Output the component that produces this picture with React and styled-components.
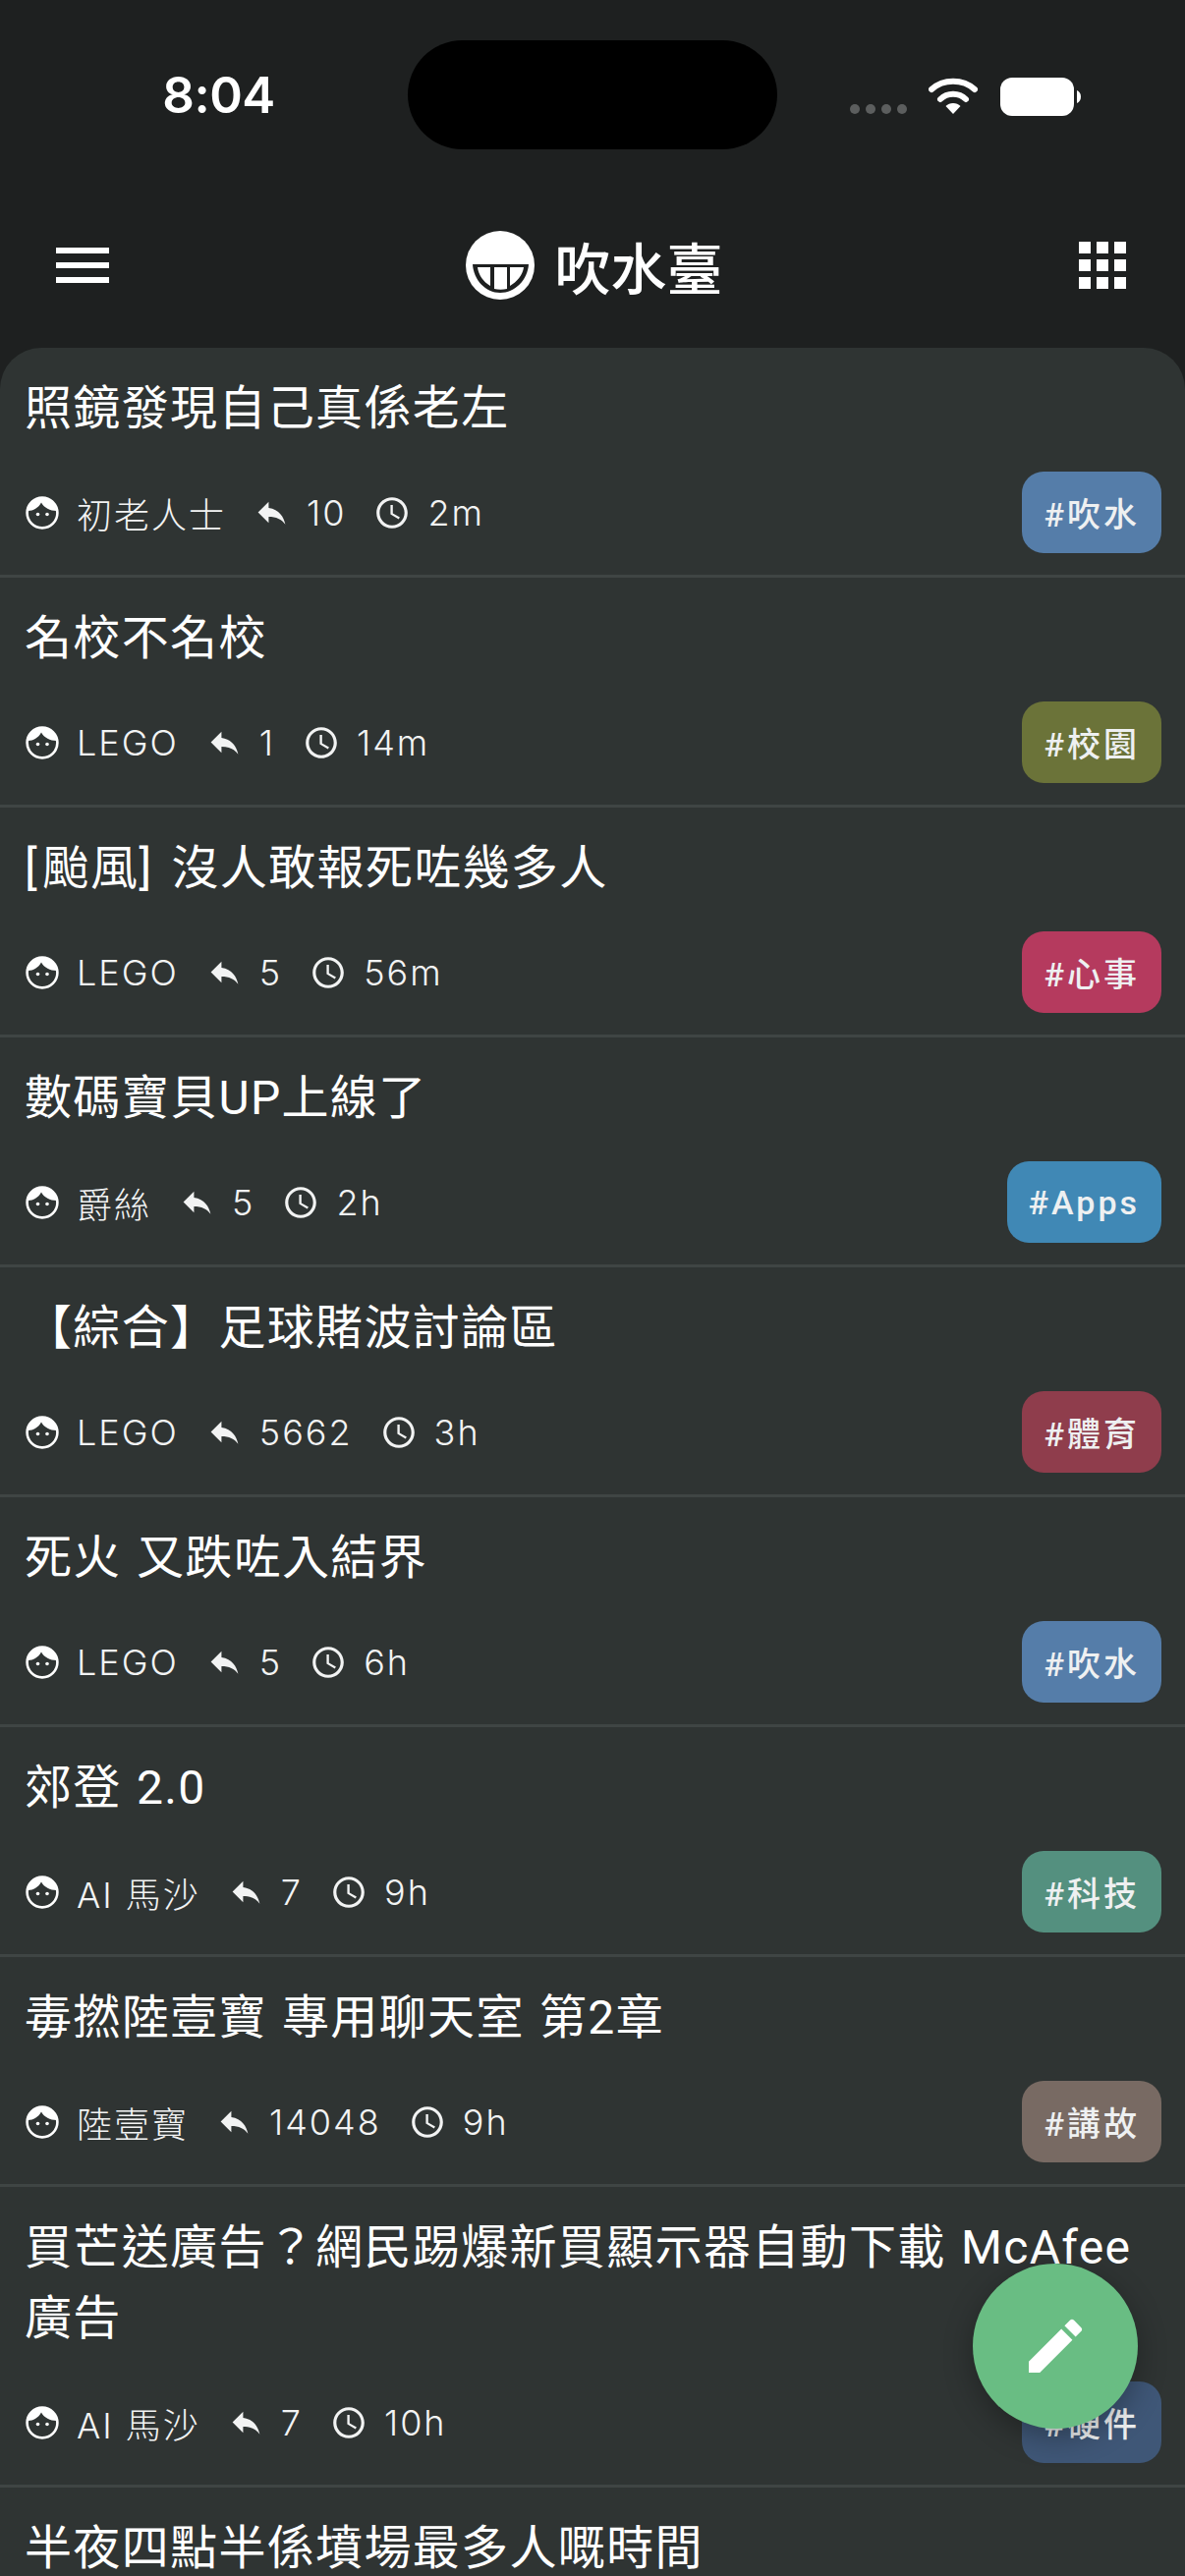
import React from "react"
import styled, { createGlobalStyle } from "styled-components"
import { MdMenu, MdApps, MdReply, MdAccessTime, MdEdit } from "react-icons/md"

const GlobalStyle = createGlobalStyle`
  html, body {
    margin: 0;
    padding: 0;
    background: #1e2020;
  }
`

const Screen = styled.div`
  position: relative;
  width: 1206px;
  height: 2622px;
  overflow: hidden;
  background: #1e2020;
  color: #fff;
  font-family: Roboto, "Noto Sans CJK TC", sans-serif;
`

const StatusBar = styled.div`
  display: grid;
  grid-template-columns: 415px 376px 1fr;
  height: 186px;
  padding-top: 41px;
  box-sizing: border-box;
`

const Clock = styled.div`
  font-family: Inter, sans-serif;
  font-size: 51px;
  font-weight: 600;
  line-height: 111px;
  text-align: center;
  padding-left: 30px;
  letter-spacing: -0.5px;
`

const Island = styled.div`
  height: 111px;
  border-radius: 56px;
  background: #000;
`

const StatusIcons = styled.div`
  display: flex;
  align-items: flex-start;
  padding: 38px 0 0 74px;
  gap: 22px;
`

const Dots = styled.div`
  display: flex;
  gap: 6px;
  padding-top: 27px;
`

const Dot = styled.span`
  width: 10px;
  height: 10px;
  border-radius: 50%;
  background: #5c5e5e;
`

const AppBar = styled.div`
  display: flex;
  align-items: center;
  justify-content: space-between;
  height: 168px;
  padding: 0 48px;
`

const Brand = styled.div`
  display: flex;
  align-items: center;
  gap: 21px;
  padding-left: 3px;
  font-size: 57px;
  font-weight: 500;
`

const List = styled.div`
  background: #2f3433;
  border-radius: 42px 42px 0 0;
`

const Row = styled.div`
  padding: 26px 24px 22px 25px;
  border-bottom: 3px solid #3f4544;
`

const Title = styled.div`
  font-size: 48px;
  line-height: 72px;
  letter-spacing: 1.35px;
  word-spacing: 2px;
  margin-bottom: 28px;
`

const Bracket = styled.span`
  letter-spacing: 5px;
`

const MetaRow = styled.div`
  display: flex;
  align-items: center;
  justify-content: space-between;
  height: 83px;
`

const Meta = styled.div`
  display: flex;
  align-items: center;
  gap: 28px;
  font-family: Inter, "Noto Sans CJK TC", sans-serif;
  font-size: 36px;
  font-weight: 300;
  letter-spacing: 2px;
  color: #f2f3f3;
`

const MetaItem = styled.span`
  display: flex;
  align-items: center;
  gap: 17px;
`

const Tag = styled.div`
  display: flex;
  align-items: center;
  height: 83px;
  padding: 0 22px;
  border-radius: 22px;
  background: ${(p) => p.$color};
  font-size: 34px;
  font-weight: 500;
  letter-spacing: 3px;
  color: #eef0f1;
`

const Fab = styled.div`
  position: absolute;
  left: 990px;
  top: 2304px;
  width: 168px;
  height: 168px;
  border-radius: 50%;
  background: #69bd83;
  display: flex;
  align-items: center;
  justify-content: center;
  box-shadow: 0 9px 30px rgba(0, 0, 0, 0.3);
`

const FaceIcon = () => (
  <svg width="36" height="36" viewBox="0 0 36 36">
    <circle cx="18" cy="18" r="15.4" fill="none" stroke="#fff" strokeWidth="2.6" />
    <path d="M3.500 16 C4 9 10 2.500 18 2.500 C26 2.500 32 9 32.500 16 C26 16 20 13 17 7.500 C14 13 9 16 3.500 16 Z" fill="#fff" />
    <circle cx="13.500" cy="19.500" r="1.800" fill="#fff" />
    <circle cx="23" cy="19.500" r="1.800" fill="#fff" />
  </svg>
)

const LogoIcon = () => (
  <svg width="70" height="70" viewBox="0 0 70 70">
    <circle cx="35" cy="35" r="35" fill="#fff" />
    <path d="M7 34 H64 C63 50 50 63 35 63 C20 63 8 50 7 34 Z" fill="#1e2020" />
    <path d="M12 37 H25 V56 C18 52 13 45 12 37 Z M29 37 H42 V59 C38 60 33 60 29 59 Z M45 37 H59 C58 45 52 52 45 56 Z" fill="#fff" />
  </svg>
)

const WifiIcon = () => (
  <svg width="51" height="38" viewBox="0 0 51 38">
    <path d="M3 12 C15 1 35 1 47 12" fill="none" stroke="#fff" strokeWidth="6" strokeLinecap="round" />
    <path d="M12 22 C19 15 31 15 38 22" fill="none" stroke="#fff" strokeWidth="6" strokeLinecap="round" />
    <path d="M25 26 C28 26 30.500 27 32.500 29 L25 37 L17.500 29 C19.500 27 22 26 25 26 Z" fill="#fff" />
  </svg>
)

const BatteryIcon = () => (
  <svg width="82" height="39" viewBox="0 0 82 39">
    <rect x="0" y="0" width="75" height="39" rx="12" fill="#fff" />
    <path d="M78 13 C80.500 14 82 16.500 82 19.500 C82 22.500 80.500 25 78 26 Z" fill="#fff" />
  </svg>
)

const threads = [
  { title: "照鏡發現自己真係老左", user: "初老人士", replies: "10", time: "2m", tag: "#吹水", color: "#557da9" },
  { title: "名校不名校", user: "LEGO", replies: "1", time: "14m", tag: "#校園", color: "#6b7339" },
  {
    title: (
      <>
        <Bracket>[</Bracket>颱風<Bracket>]</Bracket> 沒人敢報死咗幾多人
      </>
    ),
    user: "LEGO",
    replies: "5",
    time: "56m",
    tag: "#心事",
    color: "#b53a5e",
  },
  { title: "數碼寶貝UP上線了", user: "爵絲", replies: "5", time: "2h", tag: "#Apps", color: "#4088b5" },
  { title: "【綜合】足球賭波討論區", user: "LEGO", replies: "5662", time: "3h", tag: "#體育", color: "#8f3d4c" },
  { title: "死火 又跌咗入結界", user: "LEGO", replies: "5", time: "6h", tag: "#吹水", color: "#557da9" },
  { title: "郊登 2.0", user: "AI 馬沙", replies: "7", time: "9h", tag: "#科技", color: "#54907f" },
  { title: "毒撚陸壹寶 專用聊天室 第2章", user: "陸壹寶", replies: "14048", time: "9h", tag: "#講故", color: "#786a63" },
  { title: "買芒送廣告？網民踢爆新買顯示器自動下載 McAfee 廣告", user: "AI 馬沙", replies: "7", time: "10h", tag: "#硬件", color: "#3f5777" },
  { title: "半夜四點半係墳場最多人嘅時間", user: "LEGO", replies: "3", time: "11h", tag: "#吹水", color: "#557da9" },
]

function App() {
  return (
    <Screen>
      <GlobalStyle />
      <StatusBar>
        <Clock>8:04</Clock>
        <Island />
        <StatusIcons>
          <Dots>
            <Dot />
            <Dot />
            <Dot />
            <Dot />
          </Dots>
          <WifiIcon />
          <BatteryIcon />
        </StatusIcons>
      </StatusBar>
      <AppBar>
        <MdMenu size={72} />
        <Brand>
          <LogoIcon />
          吹水臺
        </Brand>
        <MdApps size={72} />
      </AppBar>
      <List>
        {threads.map((t, i) => (
          <Row key={i}>
            <Title>{t.title}</Title>
            <MetaRow>
              <Meta>
                <MetaItem>
                  <FaceIcon />
                  {t.user}
                </MetaItem>
                <MetaItem>
                  <MdReply size={37} />
                  {t.replies}
                </MetaItem>
                <MetaItem>
                  <MdAccessTime size={38} />
                  {t.time}
                </MetaItem>
              </Meta>
              <Tag $color={t.color}>{t.tag}</Tag>
            </MetaRow>
          </Row>
        ))}
      </List>
      <Fab>
        <MdEdit size={72} color="#fff" />
      </Fab>
    </Screen>
  )
}

export default App
